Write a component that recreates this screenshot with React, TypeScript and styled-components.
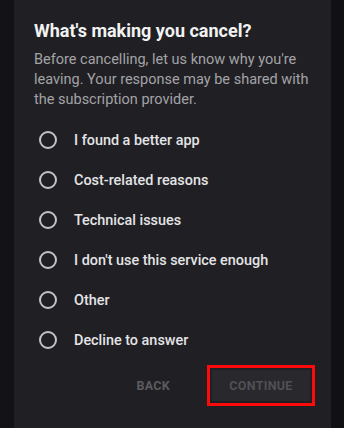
import React from "react";
import styled, { createGlobalStyle } from "styled-components";

const Global = createGlobalStyle`
  html, body { margin: 0; padding: 0; background: #131317; }
  body { font-family: Roboto, "Noto Sans", sans-serif; }
`;

const Screen = styled.div`
  width: 344px;
  height: 428px;
  display: flex;
  background: #131317;
  overflow: hidden;
`;

const Panel = styled.div`
  margin-left: 14px;
  width: 317px;
  height: 428px;
  background: #202024;
  box-sizing: border-box;
  padding: 19px 20px 0 20px;
  display: flex;
  flex-direction: column;
`;

const RightEdge = styled.div`
  flex: 1;
  background: #111115;
`;

const Title = styled.h1`
  margin: 0;
  font-size: 18px;
  font-weight: 700;
  color: #f2f2f2;
  line-height: 24px;
`;

const Desc = styled.p`
  margin: 7px 0 0 0;
  font-size: 14.5px;
  line-height: 20px;
  color: #a3a3a7;
`;

const Options = styled.div`
  margin-top: 10px;
  display: flex;
  flex-direction: column;
`;

const Row = styled.label`
  height: 40px;
  display: flex;
  align-items: center;
  gap: 17px;
  padding-left: 5px;
`;

const Radio = styled.span`
  width: 14px;
  height: 14px;
  border: 2px solid #c4c4c8;
  border-radius: 50%;
  flex: none;
`;

const OptionText = styled.span`
  font-size: 14.4px;
  color: #e4e4e6;
  font-weight: 500;
`;

const Actions = styled.div`
  display: flex;
  justify-content: flex-end;
  align-items: center;
  margin-top: 5px;
  margin-right: -4px;
  gap: 37px;
`;

const TextButton = styled.button<{ $boxed?: boolean }>`
  font-family: Roboto, sans-serif;
  font-size: 12.5px;
  font-weight: 700;
  letter-spacing: 0.3px;
  text-transform: uppercase;
  color: ${(p) => (p.$boxed ? "#505055" : "#5b5b60")};
  background: ${(p) => (p.$boxed ? "#29292d" : "transparent")};
  border: ${(p) => (p.$boxed ? "3px solid #ff0a0a" : "none")};
  box-sizing: border-box;
  width: ${(p) => (p.$boxed ? "108px" : "auto")};
  height: ${(p) => (p.$boxed ? "41px" : "auto")};
  padding: 0;
  box-shadow: ${(p) => (p.$boxed ? "inset 0 0 0 2px #202024" : "none")};
`;

const options = [
  "I found a better app",
  "Cost-related reasons",
  "Technical issues",
  "I don't use this service enough",
  "Other",
  "Decline to answer",
];

export default function App() {
  return (
    <Screen>
      <Global />
      <Panel>
        <Title>What's making you cancel?</Title>
        <Desc>
          Before cancelling, let us know why you're leaving. Your response may be shared with
          the subscription provider.
        </Desc>
        <Options>
          {options.map((o) => (
            <Row key={o}>
              <Radio />
              <OptionText>{o}</OptionText>
            </Row>
          ))}
        </Options>
        <Actions>
          <TextButton>Back</TextButton>
          <TextButton $boxed>Continue</TextButton>
        </Actions>
      </Panel>
      <RightEdge />
    </Screen>
  );
}
